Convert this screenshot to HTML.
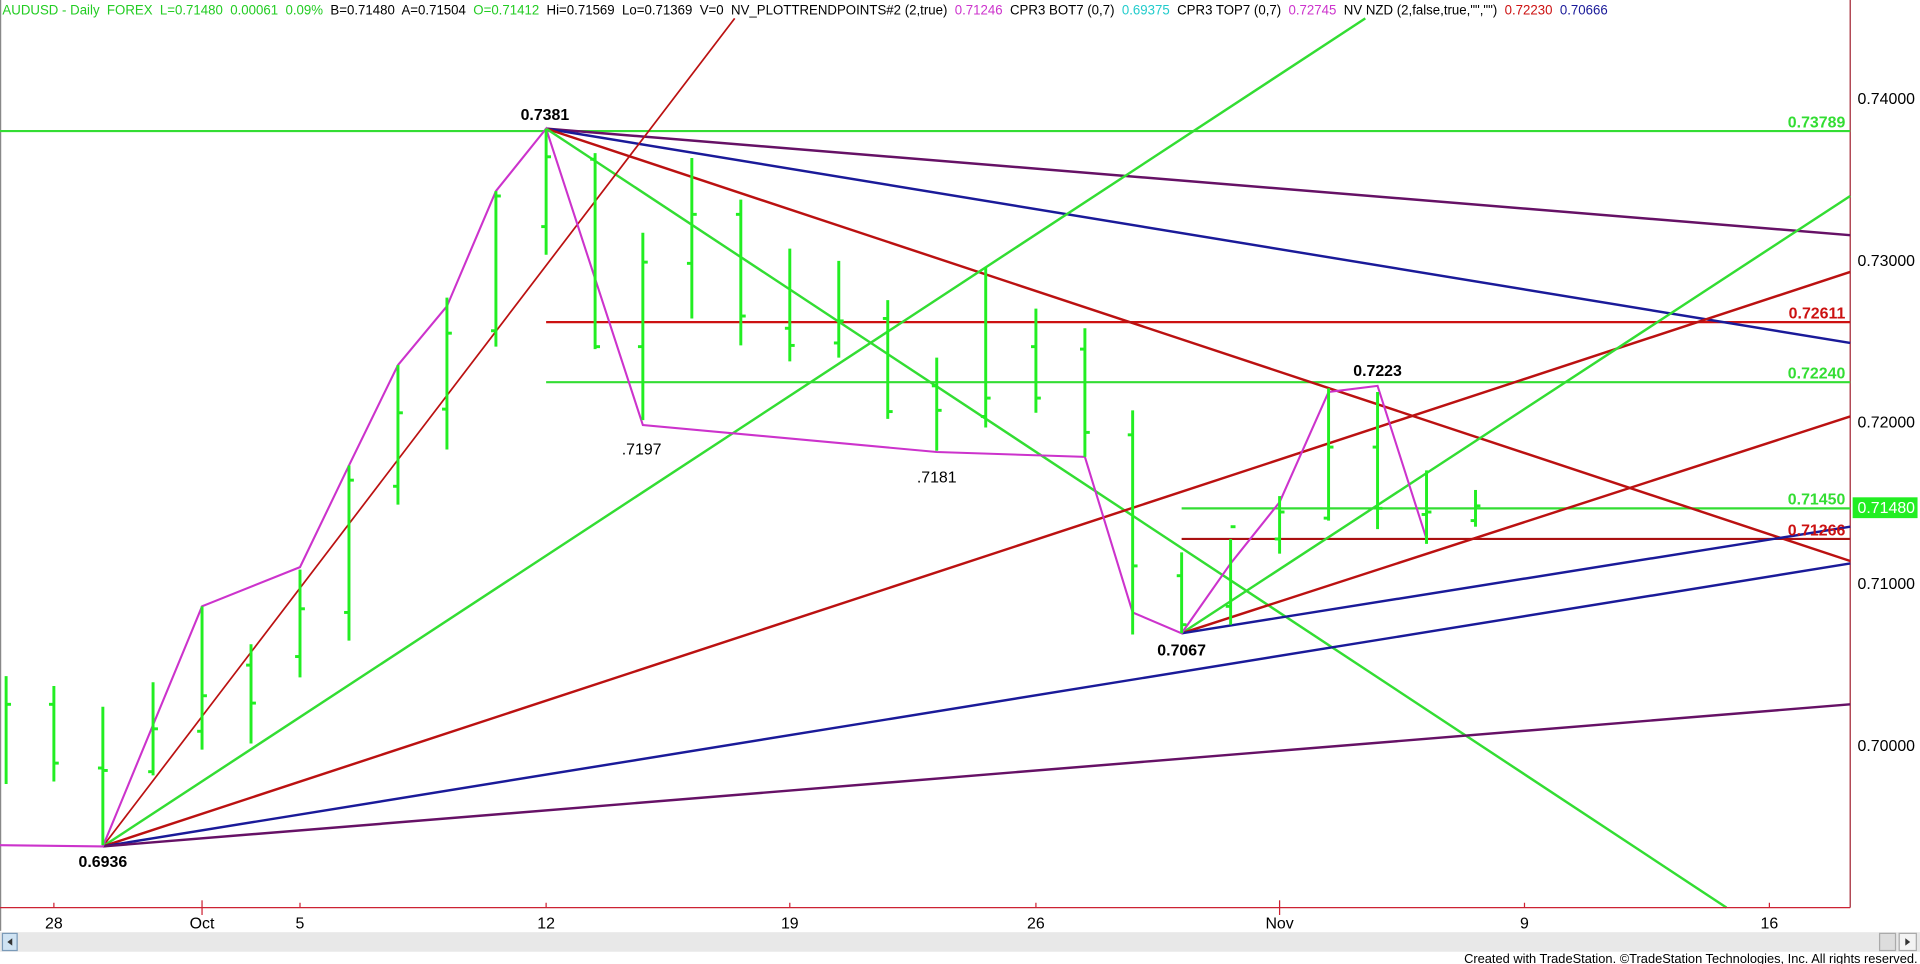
<!DOCTYPE html>
<html><head><meta charset="utf-8"><style>
html,body{margin:0;padding:0;background:#fff;overflow:hidden}
svg{display:block}
text{font-family:"Liberation Sans",Arial,sans-serif}
</style></head><body>
<svg width="1920" height="964" viewBox="0 0 1568 787" preserveAspectRatio="none" xmlns="http://www.w3.org/2000/svg">
<rect width="1568" height="787" fill="#fff"/>
<line x1="0.5" y1="0" x2="0.5" y2="760" stroke="#888" stroke-width="1"/>
<line x1="1511" y1="0" x2="1511" y2="741" stroke="#a02030" stroke-width="1"/>
<g stroke-width="1.8" fill="none">
<line x1="0" y1="107" x2="1511" y2="107" stroke="#33dd33"/>
<line x1="446" y1="263" x2="1511" y2="263" stroke="#cc1111"/>
<line x1="446" y1="312" x2="1511" y2="312" stroke="#33dd33"/>
<line x1="965" y1="415" x2="1511" y2="415" stroke="#33dd33"/>
<line x1="965" y1="440" x2="1511" y2="440" stroke="#aa1111"/>
</g>
<g stroke-width="2" fill="none">
<line x1="446" y1="105" x2="1511" y2="192" stroke="#661166"/>
<line x1="446" y1="105" x2="1511" y2="280" stroke="#1a1a99"/>
<line x1="446" y1="105" x2="1511" y2="458" stroke="#bb1111"/>
<line x1="446" y1="105" x2="1410" y2="741" stroke="#33dd33"/>
<line x1="84" y1="691" x2="600" y2="15" stroke="#bb1111" stroke-width="1.4"/>
<line x1="84" y1="691" x2="1115" y2="15" stroke="#33dd33"/>
<line x1="84" y1="691" x2="1511" y2="222" stroke="#bb1111"/>
<line x1="84" y1="691" x2="1511" y2="460" stroke="#1a1a99"/>
<line x1="84" y1="691" x2="1511" y2="575" stroke="#661166"/>
<line x1="965" y1="517" x2="1511" y2="160" stroke="#33dd33"/>
<line x1="965" y1="517" x2="1511" y2="340" stroke="#bb1111"/>
<line x1="965" y1="517" x2="1511" y2="430" stroke="#1a1a99"/>
</g>
<polyline fill="none" stroke="#cc33cc" stroke-width="1.7" points="0,690 84,691 165,495 245,463 285,380 325,298 365,250 405,156 446,105 525,347 765,369 886,373 925,500 965,517 1005,460 1045,410 1085,320 1125,315 1165,440"/>
<g stroke="#22ee22" stroke-width="2.4" fill="none" id="bars"></g>
<g font-size="13" font-weight="bold" fill="#000" text-anchor="middle">
<text x="445" y="98">0.7381</text>
<text x="84" y="708">0.6936</text>
<text x="965" y="535">0.7067</text>
<text x="1125" y="307">0.7223</text>
</g>
<g font-size="13" fill="#000" text-anchor="middle">
<text x="524" y="371">.7197</text>
<text x="765" y="394">.7181</text>
</g>
<g font-size="13" font-weight="bold" text-anchor="end">
<text x="1507" y="104" fill="#33dd33">0.73789</text>
<text x="1507" y="260" fill="#cc1111">0.72611</text>
<text x="1507" y="309" fill="#33dd33">0.72240</text>
<text x="1507" y="412" fill="#33dd33">0.71450</text>
<text x="1507" y="437" fill="#cc1111">0.71266</text>
</g>
<g font-size="13" fill="#000">
<text x="1517" y="85">0.74000</text>
<text x="1517" y="217">0.73000</text>
<text x="1517" y="349">0.72000</text>
<text x="1517" y="481">0.71000</text>
<text x="1517" y="613">0.70000</text>
</g>
<rect x="1513" y="406" width="53" height="17" fill="#22ee22"/>
<text x="1517" y="419" font-size="13" fill="#fff">0.71480</text>
<line x1="0" y1="741" x2="1511" y2="741" stroke="#cc2233" stroke-width="1"/>
<g stroke="#cc2233" stroke-width="1">
<line x1="44" y1="737" x2="44" y2="741"/><line x1="165" y1="735" x2="165" y2="747"/><line x1="245" y1="737" x2="245" y2="741"/><line x1="446" y1="737" x2="446" y2="741"/><line x1="645" y1="737" x2="645" y2="741"/><line x1="846" y1="737" x2="846" y2="741"/><line x1="1045" y1="735" x2="1045" y2="747"/><line x1="1245" y1="737" x2="1245" y2="741"/><line x1="1445" y1="737" x2="1445" y2="741"/>
</g>
<g font-size="13" fill="#000" text-anchor="middle">
<text x="44" y="758">28</text><text x="165" y="758">Oct</text><text x="245" y="758">5</text><text x="446" y="758">12</text><text x="645" y="758">19</text><text x="846" y="758">26</text><text x="1045" y="758">Nov</text><text x="1245" y="758">9</text><text x="1445" y="758">16</text>
</g>
<rect x="0" y="761" width="1568" height="16" fill="#e8e8e8"/>
<rect x="2" y="762" width="12" height="14" fill="#cfe3f3" stroke="#7a9ab8"/>
<path d="M10,766 L6,769 L10,772Z" fill="#333"/>
<rect x="1535" y="762" width="13" height="14" fill="#ddd" stroke="#aaa"/>
<rect x="1551" y="762" width="14" height="14" fill="#f3f3f3" stroke="#aaa"/>
<path d="M1556,766 L1560,769 L1556,772Z" fill="#333"/>
<text x="1566" y="786" font-size="10.5" text-anchor="end" fill="#000">Created with TradeStation. ©TradeStation Technologies, Inc. All rights reserved.</text>
<text x="2" y="12" font-size="11.2" xml:space="preserve" textLength="1311" lengthAdjust="spacingAndGlyphs"><tspan fill="#22cc22">AUDUSD - Daily  FOREX  L=0.71480  0.00061  0.09%</tspan><tspan fill="#000">  B=0.71480  A=0.71504  </tspan><tspan fill="#22cc22">O=0.71412</tspan><tspan fill="#000">  Hi=0.71569  Lo=0.71369  V=0  NV_PLOTTRENDPOINTS#2 (2,true)  </tspan><tspan fill="#cc33cc">0.71246</tspan><tspan fill="#000">  CPR3 BOT7 (0,7)  </tspan><tspan fill="#22cccc">0.69375</tspan><tspan fill="#000">  CPR3 TOP7 (0,7)  </tspan><tspan fill="#cc33cc">0.72745</tspan><tspan fill="#000">  NV NZD (2,false,true,"","")  </tspan><tspan fill="#cc1111">0.72230</tspan><tspan fill="#000">  </tspan><tspan fill="#1a1a99">0.70666</tspan></text>
</svg>
<script>
var b=[[5,552,640,0,575],[44,560,638,575,623],[84,577,690,627,629],[125,557,633,630,595],[165,495,612,597,568],[205,526,607,543,574],[245,465,553,536,497],[285,380,523,500,392],[325,298,412,397,337],[365,243,367,334,272],[405,156,283,270,160],[446,105,208,185,128],[486,125,285,130,283],[525,190,343,283,214],[565,129,260,215,175],[605,163,282,175,258],[645,203,295,268,282],[685,213,292,280,262],[725,245,342,260,336],[765,292,368,315,335],[805,218,349,340,325],[846,252,337,283,325],[886,268,373,285,353],[925,335,518,355,462],[965,451,517,470,510],[1005,440,510,495,430],[1045,405,452,440,418],[1085,317,425,423,365],[1125,320,432,365,415],[1165,384,444,420,418],[1205,400,430,425,413]];
var g=document.getElementById('bars'),s='';
b.forEach(function(a){s+='<line x1="'+a[0]+'" y1="'+a[1]+'" x2="'+a[0]+'" y2="'+a[2]+'"/>';if(a[3])s+='<line x1="'+(a[0]-4)+'" y1="'+a[3]+'" x2="'+a[0]+'" y2="'+a[3]+'"/>';s+='<line x1="'+a[0]+'" y1="'+a[4]+'" x2="'+(a[0]+4)+'" y2="'+a[4]+'"/>';});
g.innerHTML=s;
</script>
</body></html>
